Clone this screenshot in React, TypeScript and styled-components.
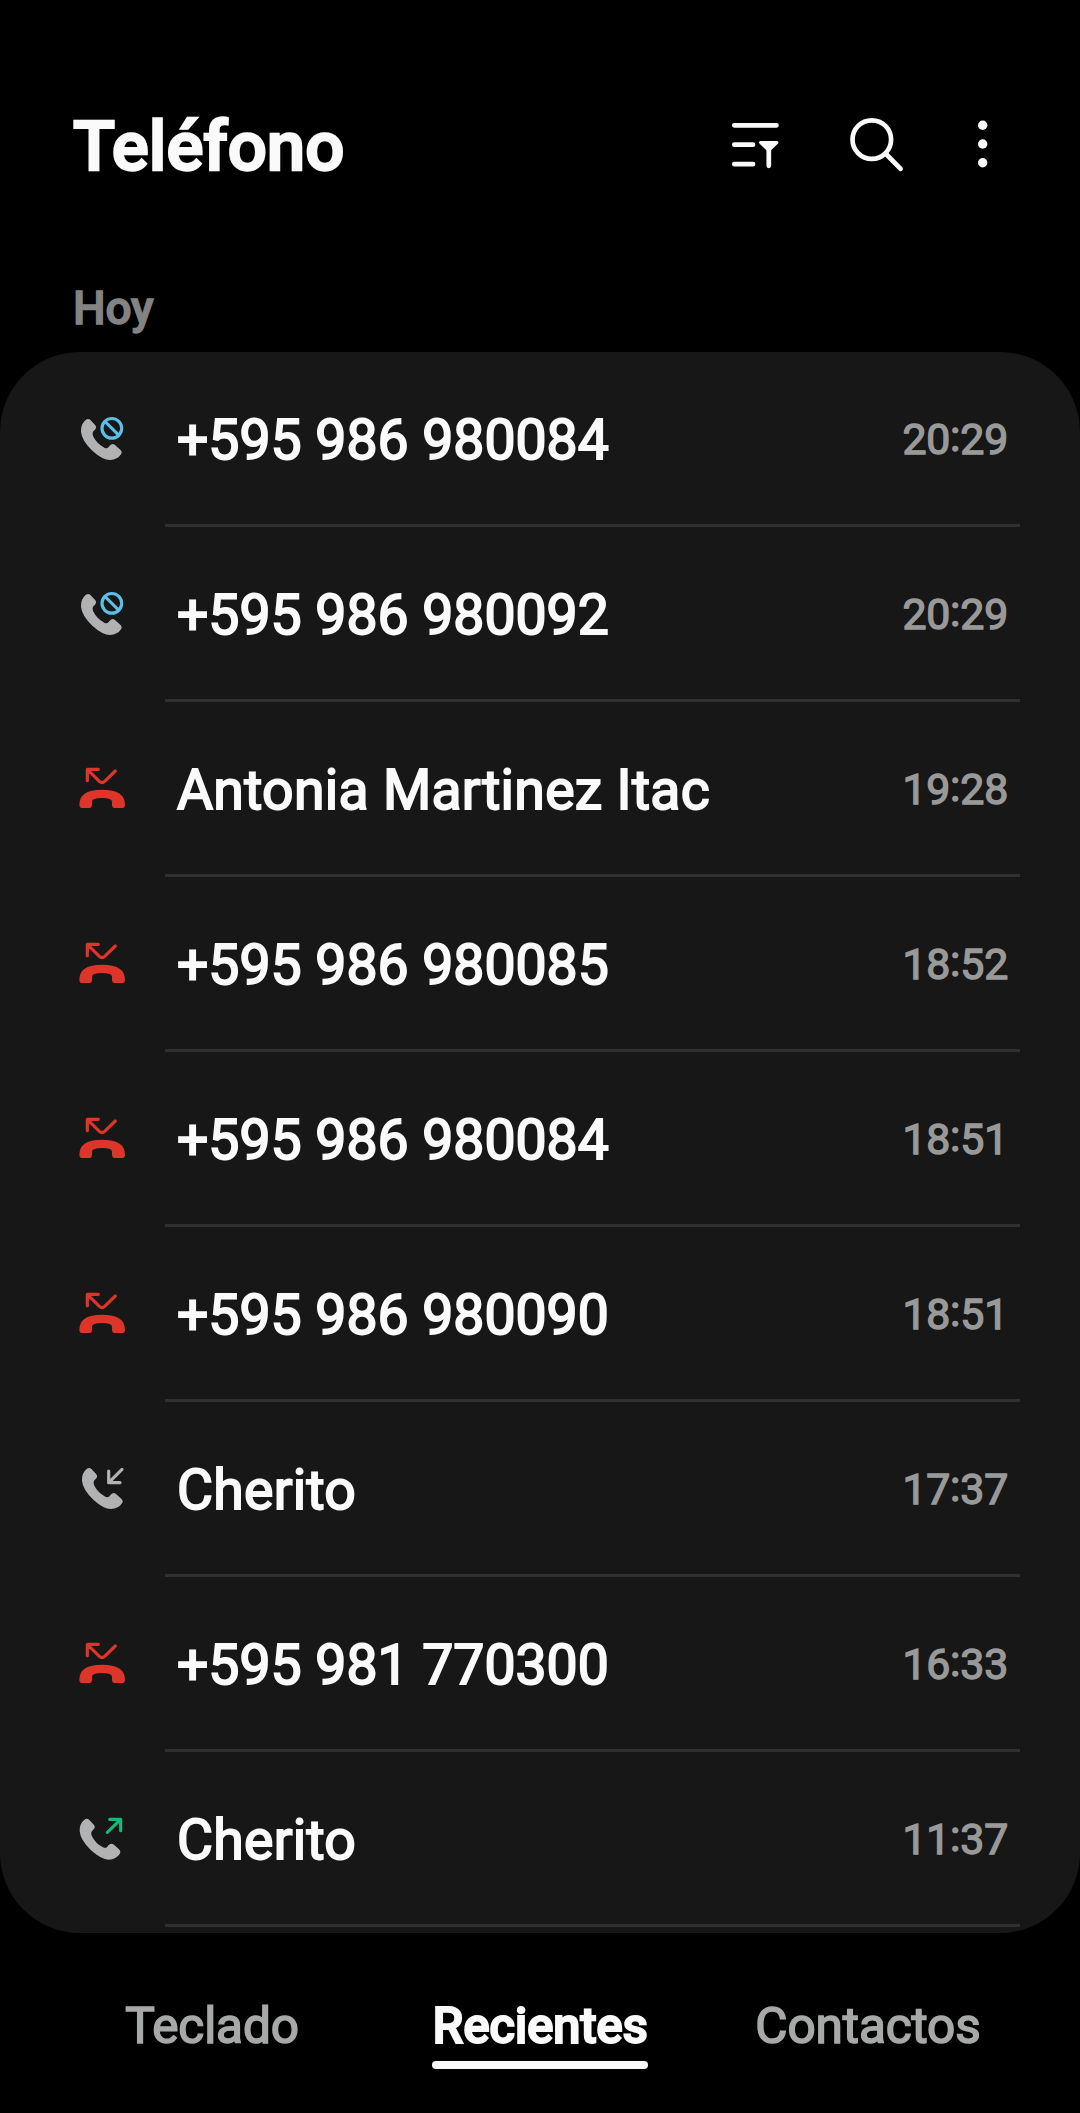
import React from 'react';
import styled, { createGlobalStyle } from 'styled-components';

const GlobalStyle = createGlobalStyle`
  html, body { margin: 0; background: #000; }
  * { box-sizing: border-box; }
`;

const Screen = styled.div`
  display: flex;
  flex-direction: column;
  width: 1080px;
  height: 2113px;
  overflow: hidden;
  background: #000;
  color: #fafafa;
  font-family: Roboto, 'Noto Sans', sans-serif;
  white-space: nowrap;
`;

const Header = styled.header`
  display: flex;
  align-items: center;
  justify-content: space-between;
  height: 292px;
  padding: 0 90px 0 73px;
`;

const Title = styled.h1`
  margin: 0;
  padding-top: 1px;
  font-size: 69px;
  line-height: 80px;
  font-weight: 500;
  -webkit-text-stroke: 2.4px #fafafa;
`;

const Actions = styled.div`
  display: flex;
  align-items: center;
  gap: 60px;
`;

const IconButton = styled.button<{ $width: number }>`
  display: flex;
  width: ${(p) => p.$width}px;
  height: 60px;
  padding: 0;
  border: 0;
  background: none;
  color: #fafafa;
`;

const SectionLabel = styled.h2`
  margin: 0;
  height: 60px;
  padding: 0 73px;
  font-size: 46px;
  line-height: 32px;
  letter-spacing: -0.2px;
  font-weight: 500;
  color: #838383;
  -webkit-text-stroke: 1.4px #838383;
`;

const CallList = styled.ul`
  flex: none;
  height: 1581px;
  margin: 0;
  padding: 0;
  list-style: none;
  overflow: hidden;
  border-radius: 80px;
  background: #171717;
`;

const CallRow = styled.li`
  display: flex;
  height: 175px;
  padding: 0 60px;
`;

const IconSlot = styled.div`
  width: 105px;
  padding-top: 43px;
`;

const RowBody = styled.div`
  display: flex;
  flex: 1;
  align-items: center;
  justify-content: space-between;
  padding: 5px 12px 0 12px;
  border-bottom: 3px solid #303030;
`;

const Caller = styled.span<{ $contact: boolean }>`
  font-size: 55.3px;
  line-height: 64px;
  font-weight: 400;
  letter-spacing: ${(p) => (p.$contact ? '0.3px' : '0')};
  -webkit-text-stroke: 1.9px #fafafa;
`;

const CallTime = styled.time`
  margin-bottom: 4px;
  font-size: 42.8px;
  line-height: 50px;
  letter-spacing: -0.2px;
  color: #999;
  -webkit-text-stroke: 1.4px #999;
`;

const Colon = styled.span`
  line-height: 0;
  vertical-align: 3.5px;
`;

const TabBar = styled.nav`
  display: grid;
  flex: 1;
  grid-template-columns: repeat(3, 1fr);
  justify-items: center;
  align-items: start;
  padding: 60px 48px 0;
`;

const Tab = styled.button<{ $active?: boolean }>`
  display: flex;
  flex-direction: column;
  height: 76px;
  padding: 0;
  border: 0;
  background: none;
  font: ${(p) => (p.$active ? 500 : 400)} 49.5px/66px Roboto, sans-serif;
  letter-spacing: ${(p) => (p.$active ? '-0.4px' : '-0.1px')};
  color: ${(p) => (p.$active ? '#fafafa' : '#a7a9a9')};
  -webkit-text-stroke: ${(p) => (p.$active ? '1.8px' : '1.6px')} currentColor;
`;

const Underline = styled.span`
  width: 100%;
  height: 8px;
  margin-top: 2px;
  flex: none;
  border-radius: 4px;
  background: #fafafa;
`;

const FilterIcon = () => (
  <svg width="60" height="60" viewBox="726 116 60 60" fill="none" stroke="currentColor" strokeWidth="4.7" strokeLinecap="round">
    <path d="M734.3 125.3H776.5M734.3 144.7H753M734.3 164.2H753M768.8 148V165.8" />
    <path d="M760.5 142.5H777L768.8 150.5Z" fill="currentColor" strokeWidth="3" strokeLinejoin="round" />
  </svg>
);

const SearchIcon = () => (
  <svg width="60" height="60" viewBox="846 116 60 60" fill="none" stroke="currentColor" strokeWidth="4.7" strokeLinecap="round">
    <circle cx="871.8" cy="139.6" r="19.3" />
    <path d="M886 154L900.6 168.8" />
  </svg>
);

const MoreIcon = () => (
  <svg width="24" height="60" viewBox="966 116 24 60" fill="currentColor">
    <circle cx="982.7" cy="125.2" r="4.7" />
    <circle cx="982.7" cy="144" r="4.7" />
    <circle cx="982.7" cy="162.8" r="4.7" />
  </svg>
);

const HANDSET =
  'M80 72Q88 66 95 73L109 88Q114 95 108 101L103 106Q98 112 102 120Q113 143 136 155Q144 159 149 153L152 149Q159 141 167 146L184 161Q191 168 186 175Q176 191 153 192Q131 192 100 164Q68 133 66 107Q65 84 80 72Z';

type Kind = 'blocked' | 'missed' | 'incoming' | 'outgoing';

const CallIcon = ({ kind }: { kind: Kind }) => (
  <svg width="90" height="90" viewBox="0 0 270 270" fill="none" strokeWidth="9.5" strokeLinecap="round" strokeLinejoin="round">
    {kind === 'blocked' && (
      <>
        <path d={HANDSET} fill="#b1b2b4" transform="translate(-3 3)" />
        <g stroke="#5bbfe6">
          <circle cx="155.500" cy="100" r="29.500" />
          <path d="M135 79.500L176 120.500" />
        </g>
      </>
    )}
    {kind === 'incoming' && (
      <>
        <path d={HANDSET} fill="#b1b2b4" />
        <path d="M186 73L147 112M146 78V113H180" stroke="#b1b2b4" />
      </>
    )}
    {kind === 'outgoing' && (
      <>
        <path d={HANDSET} fill="#b1b2b4" transform="translate(-7 2)" />
        <path d="M142 112L181 74M149 73H182V107" stroke="#1fb57a" />
      </>
    )}
    {kind === 'missed' && (
      <>
        <path d="M115 73H82V107M84 75L118 109Q126 116 134 109L166 78" stroke="#de352b" />
        <path
          d="M68 189Q58 189 58 179Q58 134 126 134Q195 134 195 179Q195 189 185 189H166Q156 189 156 179V170Q156 159 126 159Q96 159 96 170V179Q96 189 86 189Z"
          fill="#de352b"
        />
      </>
    )}
  </svg>
);

const calls: { kind: Kind; name: string; time: string }[] = [
  { kind: 'blocked', name: '+595 986 980084', time: '20:29' },
  { kind: 'blocked', name: '+595 986 980092', time: '20:29' },
  { kind: 'missed', name: 'Antonia Martinez Itac', time: '19:28' },
  { kind: 'missed', name: '+595 986 980085', time: '18:52' },
  { kind: 'missed', name: '+595 986 980084', time: '18:51' },
  { kind: 'missed', name: '+595 986 980090', time: '18:51' },
  { kind: 'incoming', name: 'Cherito', time: '17:37' },
  { kind: 'missed', name: '+595 981 770300', time: '16:33' },
  { kind: 'outgoing', name: 'Cherito', time: '11:37' },
];

const Clock = ({ value }: { value: string }) => {
  const [hours, minutes] = value.split(':');
  return (
    <CallTime>
      {hours}<Colon>:</Colon>{minutes}
    </CallTime>
  );
};

export default function App() {
  return (
    <>
      <GlobalStyle />
      <Screen>
        <Header>
          <Title>Teléfono</Title>
          <Actions>
            <IconButton $width={60}><FilterIcon /></IconButton>
            <IconButton $width={60}><SearchIcon /></IconButton>
            <IconButton $width={24}><MoreIcon /></IconButton>
          </Actions>
        </Header>
        <SectionLabel>Hoy</SectionLabel>
        <CallList>
          {calls.map((call, i) => (
            <CallRow key={i}>
              <IconSlot><CallIcon kind={call.kind} /></IconSlot>
              <RowBody>
                <Caller $contact={!call.name.startsWith('+')}>{call.name}</Caller>
                <Clock value={call.time} />
              </RowBody>
            </CallRow>
          ))}
        </CallList>
        <TabBar>
          <Tab>Teclado</Tab>
          <Tab $active>Recientes<Underline /></Tab>
          <Tab>Contactos</Tab>
        </TabBar>
      </Screen>
    </>
  );
}
